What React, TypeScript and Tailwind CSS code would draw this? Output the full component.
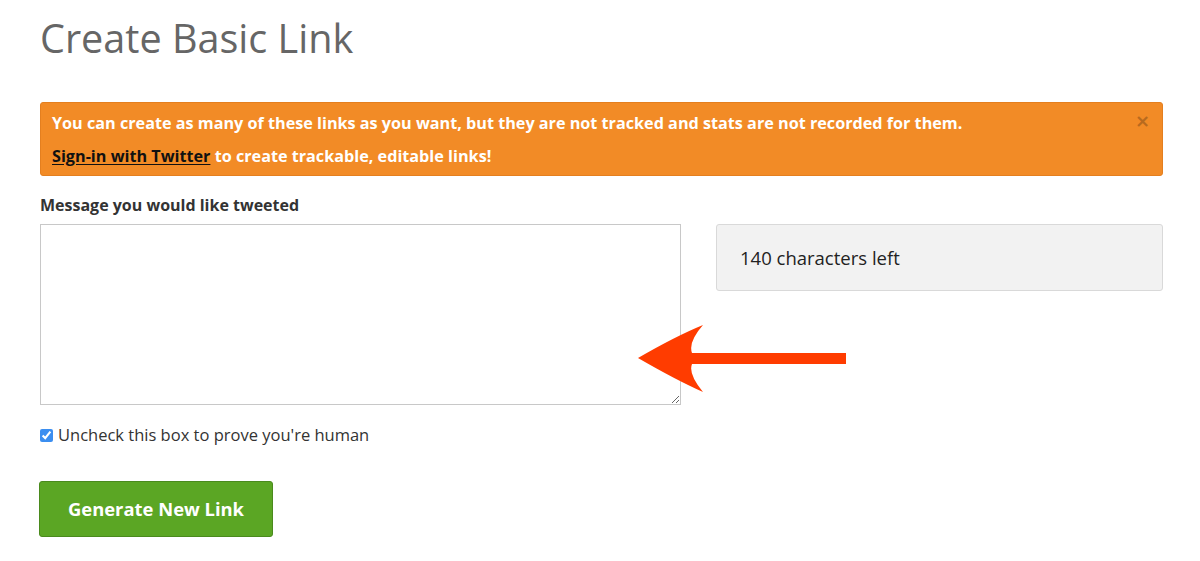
import { useState } from "react"

export default function App() {
  const [message, setMessage] = useState("")
  const [human, setHuman] = useState(true)

  return (
    <div className="relative min-h-[561px] bg-white pt-[14px] pr-[37px] pl-10 text-[#333] [font-family:'Open_Sans',sans-serif]">
      <h1 className="text-[39.6px] leading-[48px] font-normal text-[#666]">Create Basic Link</h1>

      <div className="relative mt-[40px] w-[1123px] rounded-[3px] border border-[#e47f1f] bg-[#f28b26] px-[11px] pt-[9px] pb-[8px] text-[16.2px] leading-[22px] font-bold text-white">
        <p>You can create as many of these links as you want, but they are not tracked and stats are not recorded for them.</p>
        <p className="mt-[11px]">
          <a href="#" className="text-[#111] underline underline-offset-2">Sign-in with Twitter</a> to create trackable, editable links!
        </p>
        <span className="absolute top-[8px] right-[12px] text-[18px] leading-[20px] font-bold text-[#b86a1e] [font-family:'DejaVu_Sans',sans-serif]">×</span>
      </div>

      <label className="mt-[19px] block text-[16px] leading-[20px] font-bold text-[#333]">Message you would like tweeted</label>

      <div className="mt-[9px] flex gap-[35px]">
        <textarea
          value={message}
          onChange={(e) => setMessage(e.target.value)}
          className="h-[181px] w-[641px] shrink-0 resize border border-[#c8c8c8] bg-white p-2 text-[16px] outline-none"
        />
        <div className="flex h-[67px] w-[447px] shrink-0 items-center rounded-[3px] border border-[#d9d9d9] bg-[#f2f2f2] px-[23px] text-[18.5px] text-[#222]">
          {140 - message.length} characters left
        </div>
      </div>

      <label className="mt-[20px] flex items-center gap-[5px] text-[16.5px] leading-[20px] text-[#333]">
        <input
          type="checkbox"
          checked={human}
          onChange={(e) => setHuman(e.target.checked)}
          className="h-[13px] w-[13px] accent-[#3b8ef0]"
        />
        Uncheck this box to prove you're human
      </label>

      <button className="mt-[36px] -ml-px h-[56px] w-[234px] rounded-[3px] border border-[#4a8a1d] bg-[#5ba624] text-[18.4px] font-bold text-white">
        Generate New Link
      </button>

      <svg className="pointer-events-none absolute top-0 left-0" width="1200" height="561" viewBox="0 0 1200 561">
        <path
          d="M638 358 Q 676 336 703 325 Q 688 342 692 353 L846 353 L846 364 L692 364 Q 688 374 703 392 Q 676 380 638 358 Z"
          fill="#ff3c00"
        />
      </svg>
    </div>
  )
}
